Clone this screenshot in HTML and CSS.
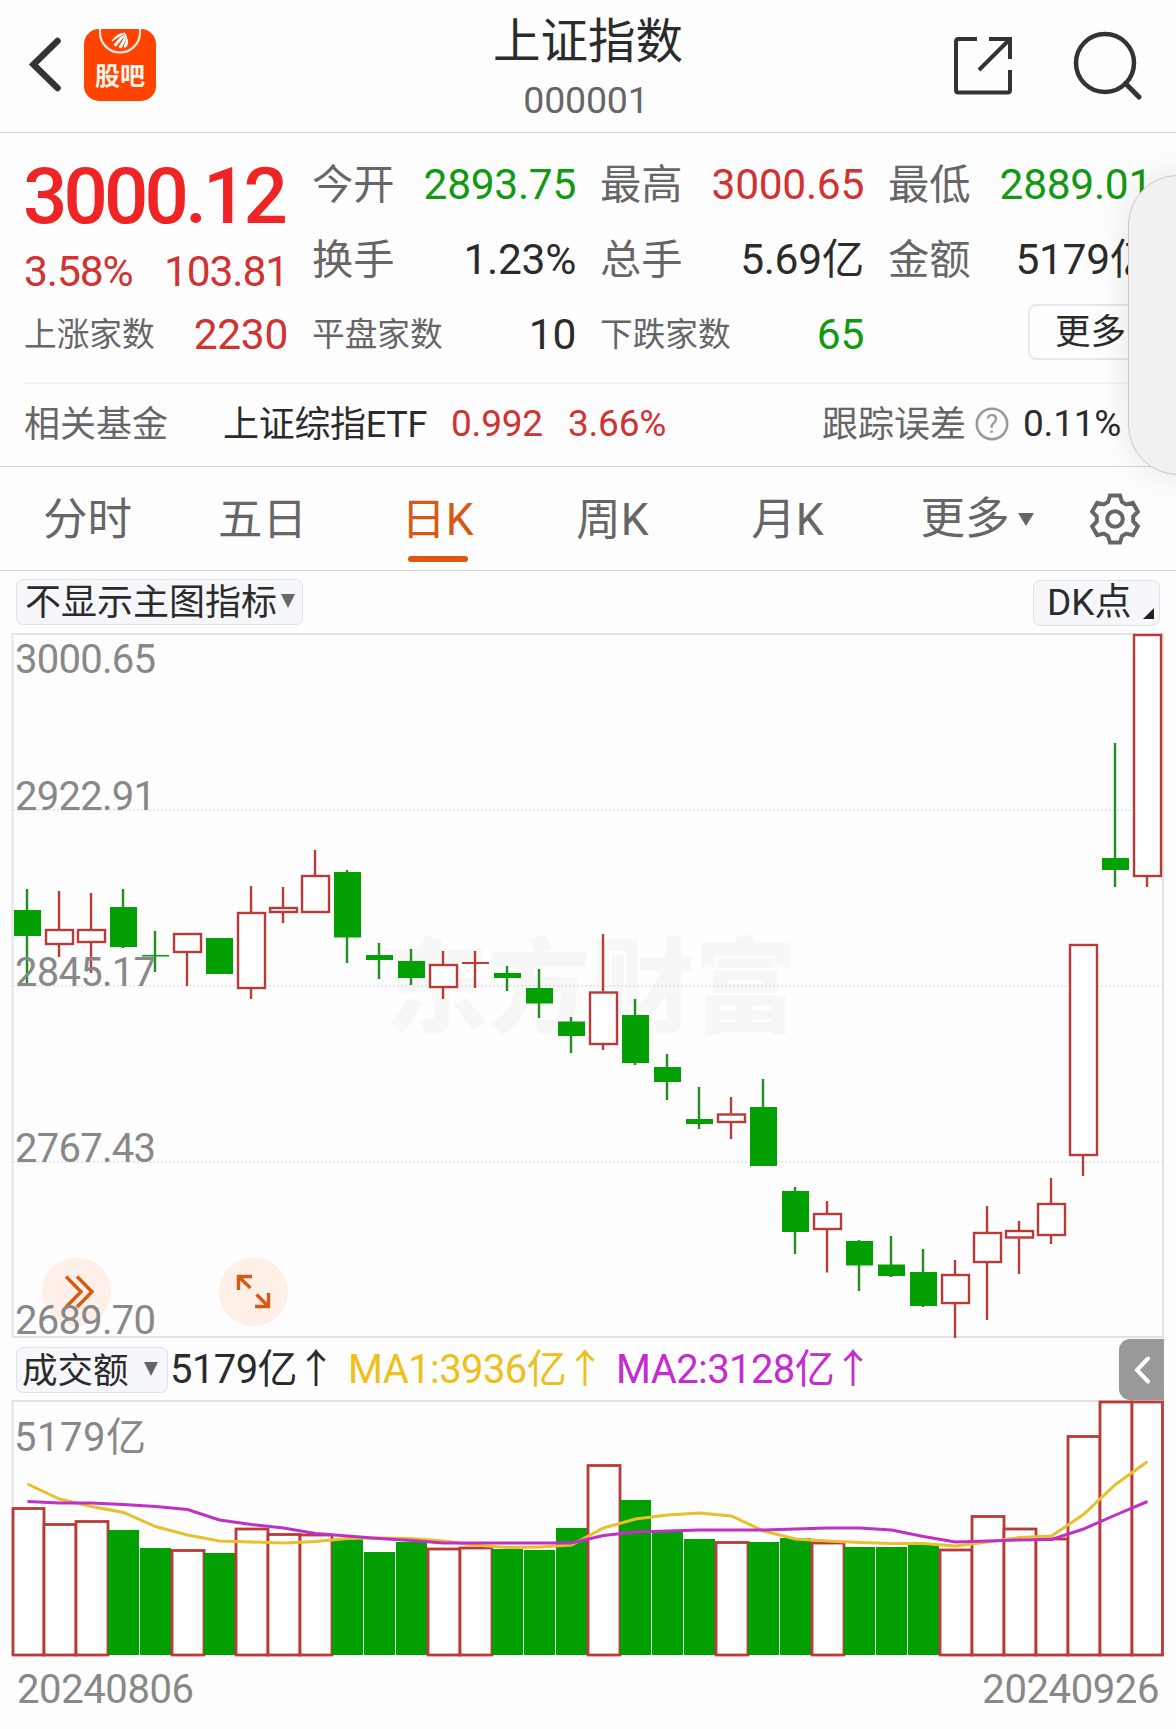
FILE: index.html
```html
<!DOCTYPE html>
<html lang="zh-CN">
<head>
    <meta charset="UTF-8">
    <title>上证指数</title>
    <link rel="stylesheet" href="styles.css">
</head>
<body>
<div class="page">
    <div class="header">
        <div class="header-left">
            <svg class="back" width="34" height="56" viewBox="0 0 34 56"><path d="M29.500 4L5.500 27.500L29.500 51" fill="none" stroke="#333" stroke-width="6.500" stroke-linecap="round"/></svg>
            <svg class="logo" width="72" height="72" viewBox="0 0 72 72">
                <rect width="72" height="72" rx="15" fill="#ff4400"/>
                <path d="M16 0V3.500A20 20 0 0 0 56 3.500V0" fill="none" stroke="#ffe9df" stroke-width="2.200"/>
                <path d="M28 12Q32 5 41 4Q34 8 28 12ZM30 16Q35 8 42 5Q37 11 32 17ZM35 18Q39 12 42 6Q41 14 37 19ZM40 18Q43 13 42 7Q45 14 42 18Z" fill="#fff" stroke="#fff" stroke-width="1"/>
                <text x="36" y="56" class="logo-text">股吧</text>
            </svg>
        </div>
        <div class="header-title">
            <h1>上证指数</h1>
            <p>000001</p>
        </div>
        <div class="header-right">
            <svg width="58" height="58" viewBox="0 0 58 58"><path d="M23 2H4.500Q2 2 2 4.500V53Q2 55.500 4.500 55.500H53.500Q56 55.500 56 53V33M35 2H56V22M55 3L25 33" fill="none" stroke="#333" stroke-width="4"/></svg>
            <svg width="70" height="70" viewBox="0 0 70 70"><circle cx="32" cy="32" r="29" fill="none" stroke="#333" stroke-width="4.500"/><path d="M52.500 52.500L66 66" stroke="#333" stroke-width="5" stroke-linecap="round"/></svg>
        </div>
    </div>

    <div class="quote">
        <div class="quote-main">
            <div class="now">
                <div class="price">3000.12</div>
                <div class="change"><span>3.58%</span><span>103.81</span></div>
            </div>
            <div class="cell"><label>今开</label><b class="green">2893.75</b></div>
            <div class="cell"><label>最高</label><b class="red">3000.65</b></div>
            <div class="cell"><label>最低</label><b class="green">2889.01</b></div>
            <div class="cell"><label>换手</label><b>1.23%</b></div>
            <div class="cell"><label>总手</label><b>5.69亿</b></div>
            <div class="cell"><label>金额</label><b>5179亿</b></div>
            <div class="cell small"><label>上涨家数</label><b class="red">2230</b></div>
            <div class="cell small"><label>平盘家数</label><b>10</b></div>
            <div class="cell small"><label>下跌家数</label><b class="green">65</b></div>
            <div class="cell last"><span class="more-btn">更多</span></div>
        </div>
        <div class="fund">
            <span class="fund-label">相关基金</span>
            <span class="fund-name">上证综指ETF</span>
            <span class="fund-num red">0.992</span>
            <span class="fund-num red">3.66%</span>
            <span class="fund-err">跟踪误差</span>
            <svg class="help" width="34" height="34" viewBox="0 0 34 34"><circle cx="17" cy="17" r="15.200" fill="none" stroke="#999" stroke-width="2.500"/><text x="17" y="25.500" class="help-text">?</text></svg>
            <span class="fund-num">0.11%</span>
        </div>
        <div class="float-panel"></div>
    </div>

    <div class="tabs">
        <span>分时</span>
        <span>五日</span>
        <span class="current">日K</span>
        <span>周K</span>
        <span>月K</span>
        <span class="tab-more">更多<i class="down"></i></span>
        <svg class="gear" width="56" height="56" viewBox="-28 -28 56 56"><path d="M-7-17L-5-23.500H5L7-17L11.200-14.600L17.850-16.100L22.850-7.400L18.200-2.400V2.400L22.850 7.400L17.850 16.100L11.200 14.600L7 17L5 23.500H-5L-7 17L-11.200 14.600L-17.850 16.100L-22.850 7.400L-18.200 2.400V-2.400L-22.850-7.400L-17.850-16.100L-11.200-14.600Z" fill="none" stroke="#666" stroke-width="4"/><circle r="7.800" fill="none" stroke="#666" stroke-width="4"/></svg>
    </div>

    <div class="toolbar">
        <span class="chip">不显示主图指标<i class="down"></i></span>
        <span class="chip chip-dk">DK点<i class="corner"></i></span>
    </div>

    <svg class="chart" width="1176" height="705" viewBox="0 633 1176 705">
        <text x="385" y="1025" class="watermark" textLength="412">东方财富</text>
        <g class="grid">
            <path d="M13 810H1163M13 986H1163M13 1162H1163"/>
        </g>
        <path class="frame" d="M12.500 634H1163V1337H12.500Z"/>
        <g id="candles"></g>
        <g class="round-btn">
            <circle cx="76.500" cy="1291.700" r="34.500"/>
            <path d="M66 1276.500L81 1291.700L66 1307M77 1276.500L92 1291.700L77 1307"/>
            <circle cx="253.500" cy="1291.700" r="34.500"/>
            <path d="M250.500 1288L239 1277M238.500 1290V1276.500H252M256.500 1294.500L268 1306M255 1306.500H268.500V1293"/>
        </g>
        <g class="axis">
            <text x="15" y="672.500" textLength="141">3000.65</text>
            <text x="15" y="810" textLength="141">2922.91</text>
            <text x="15" y="986" textLength="141">2845.17</text>
            <text x="15" y="1162" textLength="141">2767.43</text>
            <text x="15" y="1334" textLength="141">2689.70</text>
        </g>
    </svg>

    <div class="legend">
        <span class="chip chip-vol">成交额<i class="down"></i></span>
        <span class="lg lg1">5179亿<i>↑</i></span>
        <span class="lg lg2">MA1:3936亿<i>↑</i></span>
        <span class="lg lg3">MA2:3128亿<i>↑</i></span>
        <span class="fold"><svg width="18" height="28" viewBox="0 0 18 28"><path d="M15 2.500L4 14L15 25.500" fill="none" stroke="#fff" stroke-width="4" stroke-linecap="round"/></svg></span>
    </div>

    <svg class="chart" width="1176" height="257" viewBox="0 1400 1176 257">
        <path class="frame" d="M12.500 1655V1401H1163V1655"/>
        <g class="axis"><text x="14" y="1450.500" textLength="132">5179亿</text></g>
        <g id="volumes"></g>
        <polyline id="ma1" class="ma ma1"/>
        <polyline id="ma2" class="ma ma2"/>
    </svg>
    <div class="dates"><span>20240806</span><span>20240926</span></div>
</div>
<script>
    // [涨跌, 最高, 实体上沿, 实体下沿, 最低]  r 阳线 g 阴线
    var candles = [
        ["g",889,910,936,983], ["r",891,929,945,957], ["r",893,929,943,973], ["g",889,907,947,948],
        ["g",931,955,956.5,972], ["r",933,933,953,986], ["g",938,938,974,974], ["r",886,912,989,999],
        ["r",887,907,913,923], ["r",850,875,913,913], ["g",870,872,937.5,963], ["g",943,955,960,979],
        ["g",949,961,978,985], ["r",951,964,988,999], ["r",951,962,964,988], ["g",966,973,978,991],
        ["g",969,988,1003.5,1018], ["g",1017,1021.5,1036,1053], ["r",934,991.5,1045,1050], ["g",999,1015,1063,1065],
        ["g",1054,1067,1082,1100], ["g",1087,1119,1124,1129], ["r",1097,1113.5,1123,1139], ["g",1079,1107,1166,1166],
        ["g",1187,1191,1232,1254], ["r",1201,1213,1230,1272.5], ["g",1240,1241,1265.5,1291], ["g",1236,1264.5,1276,1277],
        ["g",1249,1272,1306,1307], ["r",1260,1274,1304,1338], ["r",1206,1232,1263,1320], ["r",1221,1230,1238.5,1274],
        ["r",1178,1203,1236,1244], ["r",944,944,1156,1176], ["g",743,858,870,887], ["r",634,634,877,887]
    ];
    // 成交额柱子的上沿
    var tops = [1507.5,1523.5,1520.5,1530,1548,1549.5,1553,1528,1533.5,1534,1539,1552,1542,1548,1547,1549,1550,1528,
        1464.5,1500,1532,1539,1541.5,1542,1538,1542,1547,1547,1544,1549,1515.5,1528,1538,1435.5,1401,1401];
    var ma1 = [1484,1499,1506.5,1512.5,1526.5,1535,1541,1542,1543,1541.5,1538.5,1538,1538.5,1541,1545,1547.5,1547,1545,
        1528,1519,1515,1513,1516,1531,1539,1541,1542.5,1543.5,1543.5,1546,1542,1537.5,1536,1514.5,1484.5,1461.5];
    var ma2 = [1501.5,1503,1503,1504.5,1506.5,1509.5,1520,1524.5,1528,1533.5,1536,1538.5,1540.5,1543,1543,1543,1543,1543,
        1535.5,1532,1531,1530,1530,1530,1529,1528,1528,1530,1536.5,1542,1541,1540,1539.5,1529,1515,1501.5];
    var step = 32;
    var base = 1655;

    function rect(cls, x, y, w, h) {
        return '<rect class="' + cls + '" x="' + x + '" y="' + y + '" width="' + w + '" height="' + h + '"/>';
    }
    function line(cls, x, y1, y2) {
        return '<path class="' + cls + '" d="M' + x + ' ' + y1 + 'V' + y2 + '"/>';
    }

    var html = "";
    for (var i = 0; i < candles.length; i++) {
        var c = candles[i];
        var x = 27 + step * i;
        if (c[0] === "g") {
            html += line("wick-g", x, c[1], c[4]) + rect("body-g", x - 13, c[2], 27, c[3] - c[2]);
        } else {
            html += line("wick-r", x, c[1], c[2]) + line("wick-r", x, c[3], c[4]);
            // 十字星没有实体
            if (c[3] - c[2] < 3) {
                html += rect("cross", x - 13, c[2], 27, 2);
            } else {
                html += rect("body-r", x - 13, c[2] + 1, 27, c[3] - c[2] - 2);
            }
        }
    }
    document.getElementById("candles").innerHTML = html;

    html = "";
    for (var j = 0; j < tops.length; j++) {
        var left = 12 + step * j;
        // 第一根按前一日收盘算，是红柱
        if (candles[j][0] === "g" && j !== 0 && j !== 34) {
            html += rect("body-g", left, tops[j], 31, base - tops[j]);
        } else {
            html += rect("vol-r", j === 0 ? 13 : left, tops[j] + 1, j === 0 ? 31 : (j === 35 ? 30.5 : 32), base - tops[j] - 1);
        }
    }
    document.getElementById("volumes").innerHTML = html;

    function points(list) {
        return list.map(function (y, k) {
            return (27.5 + step * k) + "," + y;
        }).join(" ");
    }
    document.getElementById("ma1").setAttribute("points", points(ma1));
    document.getElementById("ma2").setAttribute("points", points(ma2));
</script>
</body>
</html>
```
FILE: styles.css
```css
* {
    margin: 0;
    padding: 0;
    box-sizing: border-box;
}

body {
    background: #fefefe;
    color: #2b2b2b;
    font-family: Roboto, "Noto Sans CJK SC", sans-serif;
}

i, b, h1 {
    font-style: normal;
    font-weight: normal;
}

svg {
    display: block;
}

.page {
    width: 1176px;
    height: 1729px;
    overflow: hidden;
}

.red {
    color: #d13232 !important;
}

.green {
    color: #119911 !important;
}

/* 顶部 */
.header {
    height: 133px;
    border-bottom: 1px solid #d3d5d7;
    display: grid;
    grid-template-columns: 1fr 240px 1fr;
}

.header-left {
    display: flex;
    align-items: flex-start;
    padding: 29px 0 0 28px;
}

.back {
    margin-top: 8px;
}

.logo {
    margin-left: 22px;
}

.logo-text {
    font: 700 25px "Noto Sans CJK SC", sans-serif;
    text-anchor: middle;
    fill: #fff3ec;
}

.header-title {
    text-align: center;
    padding-top: 7px;
}

.header-title h1 {
    font-size: 47.5px;
    line-height: 70px;
    white-space: nowrap;
}

.header-title p {
    font-size: 37.5px;
    line-height: 47px;
    letter-spacing: -0.2px;
    color: #666;
    padding-right: 4px;
}

.header-right {
    display: flex;
    justify-content: flex-end;
    gap: 61px;
    padding: 37px 33px 0 0;
}

.header-right svg:last-child {
    margin-top: -6px;
}

/* 行情 */
.quote {
    position: relative;
    height: 334px;
    padding: 14px 25px 0;
    border-bottom: 1px solid #d3d5d7;
}

.quote-main {
    display: grid;
    grid-template-columns: repeat(4, 262px);
    grid-template-rows: repeat(3, 75px);
    column-gap: 26px;
    height: 237px;
    border-bottom: 2px solid #f4f4f6;
}

.now {
    grid-row: span 2;
    color: #f02424;
}

.price {
    font-size: 78px;
    line-height: 99px;
    font-weight: 500;
    letter-spacing: -3.8px;
    white-space: nowrap;
    margin-left: -2px;
}

.change {
    display: flex;
    justify-content: space-between;
    font-size: 42.5px;
    line-height: 51px;
    letter-spacing: -1.1px;
    color: #d13232;
    margin: 0 -1px 0 -1px;
}

.cell {
    display: flex;
    justify-content: space-between;
    align-items: baseline;
    line-height: 75px;
    white-space: nowrap;
}

.cell label {
    font-size: 41.3px;
    color: #666;
    margin-left: -1px;
}

.cell b {
    font-size: 42.5px;
    letter-spacing: -0.3px;
    margin-right: -1px;
}

.small label {
    position: relative;
    top: -3px;
    font-size: 32.7px;
}

.cell.last {
    justify-content: flex-end;
    align-items: flex-start;
}

.more-btn {
    width: 123px;
    height: 56px;
    margin-top: 7px;
    border: 2px solid #e6e8ee;
    border-radius: 8px;
    font-size: 35.5px;
    line-height: 52px;
    padding-left: 25px;
}

.fund {
    display: flex;
    align-items: center;
    height: 80px;
    padding-bottom: 1px;
    font-size: 37px;
    white-space: nowrap;
}

.fund-label,
.fund-name {
    padding-bottom: 5px;
    margin-left: -1px;
}

.fund-label {
    width: 200px;
    font-size: 36px;
    color: #666;
}

.fund-name {
    width: 228px;
    font-size: 36px;
    letter-spacing: -0.3px;
}

.fund-num {
    letter-spacing: -0.2px;
}

.fund-num + .fund-num {
    margin-left: 25px;
}

.fund-err {
    padding-bottom: 5px;
    font-size: 36px;
    color: #666;
    margin-left: auto;
}

.help {
    margin: 0 14px 0 9px;
}

.help + .fund-num {
    width: 128px;
}

.help-text {
    font: 26px Roboto, sans-serif;
    text-anchor: middle;
    fill: #999;
}

.float-panel {
    position: absolute;
    top: 42px;
    right: -60px;
    width: 108px;
    height: 300px;
    background: #f1f1f1;
    border: 1px solid #c8c8c8;
    border-radius: 50px;
    box-shadow: 0 0 36px rgba(0, 0, 0, 0.1);
}

/* 周期切换 */
.tabs {
    display: flex;
    height: 104px;
    border-bottom: 1px solid #d3d5d7;
    font-size: 44.5px;
    line-height: 106px;
    color: #666;
}

.tabs span {
    width: 175px;
    text-align: center;
}

.tabs .current {
    color: #d85a12;
    display: flex;
    flex-direction: column;
    align-items: center;
}

.current::after {
    content: "";
    width: 60px;
    height: 6px;
    margin-top: -17px;
    border-radius: 3px;
    background: #e0560f;
}

.tabs .tab-more {
    display: flex;
    align-items: center;
    justify-content: center;
    width: 204px;
    height: 104px;
}

.down {
    border: 8px solid transparent;
    border-top: 13px solid #666;
    border-bottom: 0;
    margin-left: 8px;
}

.gear {
    margin: 24px 0 0 8px;
}

.toolbar {
    display: flex;
    justify-content: space-between;
    height: 62px;
    padding: 8px 16px 0;
}

.chip {
    display: flex;
    align-items: center;
    height: 46px;
    padding: 1px 7px 0 8px;
    background: #f6f7fb;
    border: 1.5px solid #dfe2e6;
    border-radius: 7px;
    font-size: 36px;
    line-height: 42px;
    white-space: nowrap;
}

.chip .down {
    border-width: 14px 7px 0;
    margin: -3px 0 0 4px;
}

.chip-dk {
    width: 127px;
    margin-top: 1px;
    padding: 0 5px 1px 13px;
    font-size: 37px;
}

.corner {
    border-left: 11px solid transparent;
    border-bottom: 11px solid #222;
    margin: 22px 0 0 auto;
}

/* 图表 */
.frame {
    fill: none;
    stroke: #e3e3e3;
    stroke-width: 2;
}

.grid path {
    stroke: #dedede;
    stroke-width: 1.5;
    stroke-dasharray: 2 2;
}

.watermark {
    font: 900 103px "Noto Sans CJK SC", sans-serif;
    fill: #f7f7f7;
}

.axis text {
    font-size: 40px;
    fill: #888;
}

.wick-g, .wick-r {
    stroke: #1c921c;
    stroke-width: 2.4;
}

.wick-r {
    stroke: #bb3a38;
}

.body-g {
    fill: #02a002;
}

.cross {
    fill: #bb3a38;
}

.body-r, .vol-r {
    fill: #fff;
    stroke: #bb3a38;
    stroke-width: 2.4;
}

.vol-r {
    stroke-width: 2.8;
}

.ma {
    fill: none;
    stroke-width: 3;
}

.ma1 {
    stroke: #e8c02e;
}

.ma2 {
    stroke: #c030c8;
}

.round-btn circle {
    fill: #fef0e8;
}

.round-btn path {
    fill: none;
    stroke: #d85a12;
    stroke-width: 3.4;
}

.legend {
    display: flex;
    height: 62px;
    padding: 9px 12px 0 16px;
}

.chip-vol {
    width: 152px;
    padding-left: 5px;
    font-size: 35.5px;
}

.chip-vol .down {
    margin-left: auto;
    margin-right: 2px;
}

.lg {
    display: flex;
    align-items: center;
    height: 44px;
    margin-top: -3px;
    font-size: 40px;
    letter-spacing: -0.6px;
}

.lg i {
    width: 36px;
    margin-left: -1px;
    font-family: "Noto Sans CJK SC", sans-serif;
    text-align: center;
}

.lg1 {
    width: 178px;
    margin-left: 2px;
}

.lg2 {
    width: 268px;
    color: #edc01c;
}

.lg3 {
    color: #c32cd0;
}

.fold {
    display: flex;
    align-items: center;
    justify-content: center;
    width: 45px;
    height: 61px;
    margin: -8px 0 0 auto;
    background: #999;
    border-radius: 11px 0 0 11px;
}

.dates {
    display: flex;
    justify-content: space-between;
    padding: 8px 17px 0;
    font-size: 40px;
    line-height: 50px;
    letter-spacing: -0.4px;
    color: #888;
}
```
